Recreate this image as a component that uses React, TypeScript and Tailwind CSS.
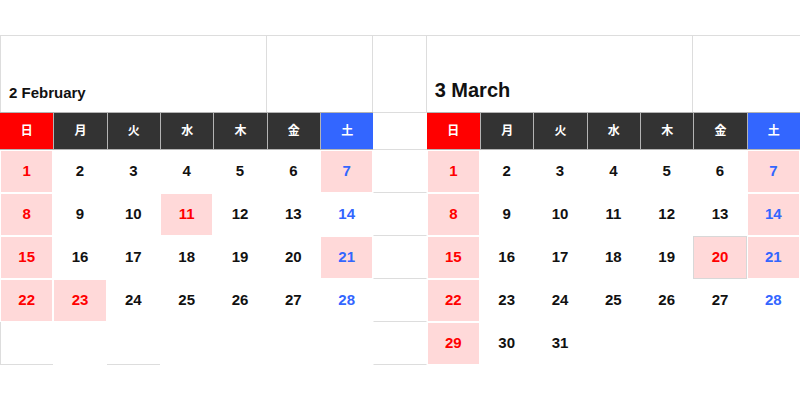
import React from "react";

type Day = { n: number | null; pink?: boolean; red?: boolean; today?: boolean };

const weekdays = ["日", "月", "火", "水", "木", "金", "土"];

// both months start on Sunday
function buildWeeks(total: number, pinkSat: number[], holidays: number[], today?: number): Day[][] {
  const weeks: Day[][] = [];
  for (let w = 0; w < 5; w++) {
    const row: Day[] = [];
    for (let d = 0; d < 7; d++) {
      const n = w * 7 + d + 1;
      if (n > total) {
        row.push({ n: null });
        continue;
      }
      const red = d === 0 || holidays.includes(n);
      row.push({ n, red, pink: red || pinkSat.includes(n), today: n === today });
    }
    weeks.push(row);
  }
  return weeks;
}

const feb = buildWeeks(28, [7, 21], [11, 23]);
const mar = buildWeeks(31, [7, 14, 21], [20], 20);

function WeekdayCell({ label, i }: { label: string; i: number }) {
  const bg = i === 0 ? "bg-[#ff0000]" : i === 6 ? "bg-[#3366ff]" : "bg-[#333333]";
  const edge = i === 0 ? "border-l-0" : "border-l";
  return (
    <div
      className={`${bg} ${edge} border-t border-b border-[#b4b4b4] flex items-center justify-center text-white text-[12px] font-bold`}
    >
      {label}
    </div>
  );
}

function DayCell({ day, col }: { day: Day; col: number }) {
  if (day.n === null) return <div className="border border-white" />;
  const color = day.red ? "text-[#ff0000]" : col === 6 ? "text-[#3366ff]" : "text-[#111111]";
  const border = day.today ? "border-[#d8d8d8]" : "border-white";
  return (
    <div
      className={`${day.pink ? "bg-[#ffd9d9]" : "bg-white"} ${border} border flex items-center justify-center text-[15px] font-bold ${color}`}
    >
      {day.n}
    </div>
  );
}

export default function App() {
  return (
    <div
      className="w-[800px] h-[400px] bg-white pt-[35px]"
      style={{ fontFamily: '"Liberation Sans", Arial, "Noto Sans CJK JP", sans-serif' }}
    >
      <div className="grid grid-cols-15 grid-rows-[77px_38px_repeat(5,43px)]">
        {/* title row */}
        <div className="col-span-5 border-t border-l border-r border-[#dddddd] flex items-end px-2 pb-[8px] text-[15px] font-bold text-[#111111]">
          2 February
        </div>
        <div className="col-span-2 border-t border-r border-[#dddddd]" />
        <div className="border-t border-r border-[#dddddd]" />
        <div className="col-span-5 border-t border-r border-[#dddddd] flex items-end px-2 pb-[7px] text-[20px] font-bold text-[#111111]">
          3 March
        </div>
        <div className="col-span-2 border-t border-[#dddddd]" />

        {/* weekday row */}
        {weekdays.map((w, i) => (
          <WeekdayCell key={`f-${w}`} label={w} i={i} />
        ))}
        <div className="border-t border-b border-[#dddddd]" />
        {weekdays.map((w, i) => (
          <WeekdayCell key={`m-${w}`} label={w} i={i} />
        ))}

        {/* day rows */}
        {[0, 1, 2, 3, 4].map((w) => (
          <React.Fragment key={w}>
            {w < 4 ? (
              feb[w].map((d, i) => <DayCell key={`f${w}-${i}`} day={d} col={i} />)
            ) : (
              <>
                <div className="border-l border-b border-[#dddddd]" />
                <div />
                <div className="border-b border-[#dddddd]" />
                <div />
                <div />
                <div />
                <div />
              </>
            )}
            <div className="border border-white border-b-[#dddddd]" />
            {mar[w].map((d, i) => (
              <DayCell key={`m${w}-${i}`} day={d} col={i} />
            ))}
          </React.Fragment>
        ))}
      </div>
    </div>
  );
}
